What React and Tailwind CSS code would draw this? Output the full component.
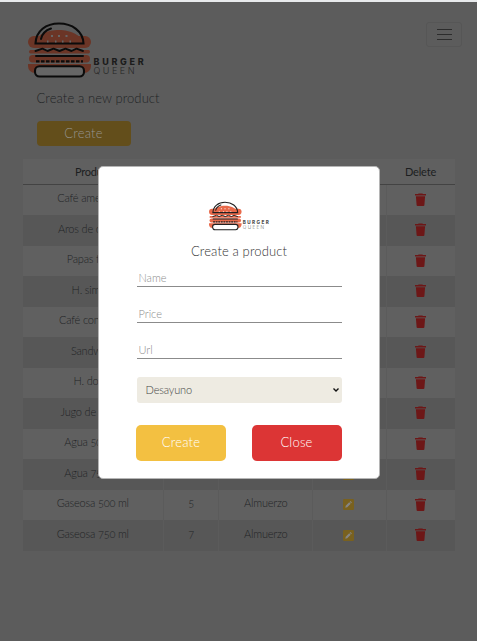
const PRODUCTS = [
  ['Café americano', '5', 'Desayuno'],
  ['Aros de cebolla', '5', 'Almuerzo'],
  ['Papas fritas', '5', 'Almuerzo'],
  ['H. simple', '10', 'Almuerzo'],
  ['Café con leche', '7', 'Desayuno'],
  ['Sandwich', '10', 'Desayuno'],
  ['H. doble', '15', 'Almuerzo'],
  ['Jugo de frutas', '7', 'Desayuno'],
  ['Agua 500 ml', '5', 'Almuerzo'],
  ['Agua 750 ml', '7', 'Almuerzo'],
  ['Gaseosa 500 ml', '5', 'Almuerzo'],
  ['Gaseosa 750 ml', '7', 'Almuerzo'],
];

function Logo({ className, ink, meat, seed, title, word }) {
  return (
    <svg className={className} viewBox="0 0 118 56" fill="none">
      <rect x="0" y="14" width="63" height="12" rx="6" fill={meat} />
      <path d="M8 21C8 12 20 8 31 8s23 5 23 13z" fill={meat} />
      <rect x="1" y="28" width="61" height="3.4" rx="1.7" fill={meat} />
      <rect x="1" y="33" width="61" height="7.4" rx="3.7" fill={meat} />
      <path d="M0 42h63v2a7 7 0 0 1-7 7H7a7 7 0 0 1-7-7z" fill={meat} />
      <path d="M7.5 21.5C8 9 18 1.5 31 1.5S55 9 55.5 21.5z" stroke={ink} strokeWidth="2.1" />
      <path d="M13 17c1-5 4-8.5 10-10.5" stroke={ink} strokeWidth="2" strokeLinecap="round" />
      <path d="M23 14h2M30 14h2M37.5 14h2M19 19.5h1.500M27 19.5h1.500M34 19.5h1.500M41.5 19.5h1.500" stroke={seed} strokeWidth="1.8" />
      <path d="M7.5 29l7-2.3 5 2.3 6-2.3 6 2.3 6-2.3 6 2.3 5-2.3 6.5 2.3" stroke={ink} strokeWidth="1.9" strokeLinecap="round" strokeLinejoin="round" />
      <path d="M8 34h47" stroke={ink} strokeWidth="2" strokeLinecap="round" />
      <path d="M8 39.3h47" stroke={ink} strokeWidth="2.3" strokeDasharray="3.5 1.5" />
      <rect x="7" y="44.2" width="49" height="10.3" rx="4.5" fill={seed} stroke={ink} strokeWidth="2.1" />
      <text x="65.5" y="42.7" fontSize="9" fontWeight="800" letterSpacing="2.700" fontFamily="Inter, sans-serif" fill={title}>BURGER</text>
      <text x="65.5" y="52.4" fontSize="9" fontWeight="300" letterSpacing="2.500" fontFamily="Inter, sans-serif" fill={word}>QUEEN</text>
    </svg>
  );
}

function Trash() {
  return (
    <svg className="h-[13px] w-[11px]" viewBox="0 0 11 13" fill="#6d1717">
      <path d="M3.6.4h3.800l.5.700H11v1.300H0V1.100h3.100z" />
      <path d="M.9 3.2h9.200l-.7 8.800a1 1 0 0 1-1 1H2.600a1 1 0 0 1-1-1z" />
    </svg>
  );
}

function Edit() {
  return (
    <svg className="h-[11px] w-[11px]" viewBox="0 0 11 11">
      <rect width="11" height="11" rx="1.2" fill="#79611f" />
      <path d="M2.300 8.700l.4-1.900 3.500-3.500 1.500 1.500-3.500 3.500zM6.700 2.800l.5-.5q.3-.3.600 0l.9.9q.3.300 0 .6l-.5.500z" fill="#858585" />
    </svg>
  );
}

const COLS = 'grid grid-cols-[140.5px_55px_94.500px_73.500px_68px]';

function Field({ label, className }) {
  return (
    <input
      className={`block w-full border-b border-[#8b8b8b] bg-transparent pl-0.5 text-[11px] font-light leading-4 outline-none placeholder:text-[#8c8c8c] ${className}`}
      placeholder={label}
    />
  );
}

export default function App() {
  return (
    <div className="relative h-[641px] w-[477px] overflow-hidden border-t-2 border-[#e8eaec] bg-[#5c5c5c] font-[Lato,'Open_Sans',sans-serif] font-light text-[#222426]">
      <header className="flex h-[78px] items-start justify-between pl-7 pr-[15px] pt-5">
        <Logo className="h-[56px] w-[118px]" ink="#0b0b0b" meat="#6b3526" seed="#666" title="#1c1c1c" word="#262626" />
        <button className="flex h-[25px] w-9 flex-col items-center justify-center gap-1 rounded-[3px] border border-[#565656]">
          <span className="h-px w-[15px] bg-[#2c2c2c]" />
          <span className="h-px w-[15px] bg-[#2c2c2c]" />
          <span className="h-px w-[15px] bg-[#2c2c2c]" />
        </button>
      </header>
      <section className="pl-[36.500px] pt-2">
        <h1 className="text-[13px] leading-5 tracking-[0.100px]">Create a new product</h1>
        <button className="mt-[13px] flex h-[25px] w-[94px] items-center justify-center rounded bg-[#634e1b] text-[13px] tracking-[0.200px] text-[#95938f]">Create</button>
      </section>
      <section className="ml-[23px] mt-[13px] w-[431.500px] text-center text-[11px] tracking-[-0.200px]">
        <div className={`${COLS} h-[25.500px] border-b border-[#434343] bg-[#606060] pt-[5px] font-normal leading-4 text-[#1c1e20]`}>
          <span>Product</span><span>Price</span><span>Type</span><span>Edit</span><span>Delete</span>
        </div>
        {PRODUCTS.map(([name, price, type], i) => (
          <div key={i} className={`${COLS} h-[30.500px] divide-x divide-[#5b5b5b] leading-4 ${i % 2 ? 'bg-[#575757]' : 'bg-[#606060]'}`}>
            <span className="pt-[5.500px] oldstyle-nums">{name}</span>
            <span className="pt-[5.500px] pl-px oldstyle-nums">{price}</span>
            <span className="pt-[5.500px] pl-px">{type}</span>
            <span className="flex justify-center pr-px pt-[9.500px]"><Edit /></span>
            <span className="flex justify-center pt-2"><Trash /></span>
          </div>
        ))}
      </section>
      <div role="dialog" className="absolute left-[98px] top-[164px] flex h-[313px] w-[282px] flex-col rounded-[5px] border border-[#b5b5b5] bg-white px-[37.500px]">
        <Logo className="ml-[72.500px] mt-[33px] h-8 w-[61px]" ink="#202020" meat="#e8694a" seed="#fff" title="#555" word="#777" />
        <h2 className="mt-[9px] text-center text-[13px] leading-5 tracking-[0.130px] text-[#333]">Create a product</h2>
        <Field label="Name" className="mt-[9px]" />
        <Field label="Price" className="mt-[19px]" />
        <Field label="Url" className="mt-[19px]" />
        <div className="mt-[18px] flex h-[26px] items-center justify-between rounded-[3px] bg-[#eeebe2] pl-[9px] pr-[3px] text-[11px] tracking-[-0.150px] text-[#444]">
          <span>Desayuno</span>
          <svg className="h-1 w-1.5" viewBox="0 0 6 4" fill="none" stroke="#111" strokeWidth="1.4"><path d="M.5.6L3 3 5.500.6" /></svg>
        </div>
        <div className="-ml-[0.500px] mt-[22px] flex justify-between text-[13px] tracking-[0.200px] text-white">
          <button className="h-9 w-[90px] rounded-[5px] bg-[#f3c041]">Create</button>
          <button className="h-9 w-[90px] rounded-[5px] bg-[#dc3535]">Close</button>
        </div>
      </div>
    </div>
  );
}
